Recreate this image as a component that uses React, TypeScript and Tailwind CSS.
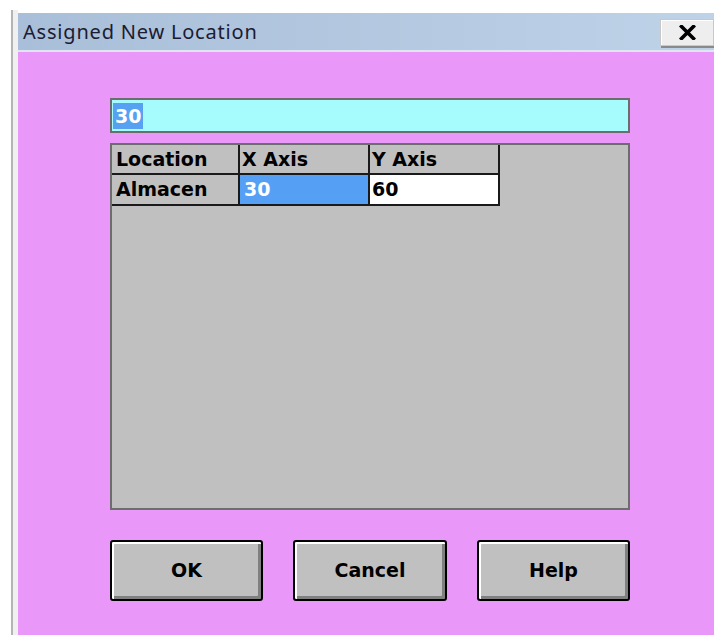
import React from "react";

const bitmapFont = { fontFamily: '"DejaVu Sans", "Liberation Sans", sans-serif' };

function CloseGlyph() {
  return (
    <svg width="17" height="15" viewBox="0 0 17 15">
      <path d="M2.5 1.5 L14.5 13.5 M14.5 1.5 L2.5 13.5" stroke="#000" strokeWidth="3.6" strokeLinecap="square" />
    </svg>
  );
}

function DialogButton({ label, width }: { label: string; width: string }) {
  return (
    <button
      className={`${width} h-[61px] bg-[#c0c0c0] border-2 border-black rounded-[3px] shadow-[inset_2px_2px_0_#ffffff,inset_-3px_-3px_0_#808080] flex items-center justify-center text-[19px] font-bold text-black`}
      style={bitmapFont}
    >
      {label}
    </button>
  );
}

export default function App() {
  return (
    <div className="w-[714px] h-[635px] overflow-hidden bg-white flex">
      {/* window frame at the left */}
      <div className="w-[11px] shrink-0" />
      <div className="w-[2px] shrink-0 mt-[10px] bg-[#b4b4b4]" />
      <div className="w-[5px] shrink-0 mt-[10px] bg-[#f0f0f0]" />

      <div className="flex-1 flex flex-col pt-[13px] min-w-0">
        {/* title bar */}
        <div className="h-[37px] shrink-0 flex items-center justify-between bg-gradient-to-r from-[#a9bed8] to-[#bed2e8]">
          <span
            className="pl-[5px] text-[20px] tracking-[0.8px] text-[#1b1b33] leading-none"
            style={{ fontFamily: '"Noto Sans", "Open Sans", sans-serif' }}
          >
            Assigned New Location
          </span>
          <div className="w-[54px] h-[27px] mt-[2px] bg-[#eeeeee] border border-[#c8c8c8] shadow-[inset_1px_1px_0_#ffffff,1px_2px_0_#8a8a8a] flex items-center justify-center">
            <CloseGlyph />
          </div>
        </div>
        <div className="h-[2px] shrink-0 bg-[#dde6f1]" />

        {/* dialog body */}
        <div className="flex-1 bg-[#e997f9] pl-[92px] pt-[46px] flex flex-col">
          <div className="w-[520px] h-[35px] border-2 border-[#6d6d6d] bg-[#a6fbfd] flex items-center pl-[1px]">
            <span
              className="h-[26px] px-[2px] bg-[#57a1f3] text-white text-[19px] leading-[26px] font-bold"
              style={bitmapFont}
            >
              30
            </span>
          </div>

          <div className="mt-[10px] w-[520px] h-[367px] border-2 border-[#6d6d6d] bg-[#c0c0c0]">
            <div
              className="grid grid-cols-[128px_130px_130px] grid-rows-[30px_31px] w-[388px] text-[19px] font-bold text-black"
              style={bitmapFont}
            >
              <div className="border-r-2 border-b-2 border-[#1a1a1a] flex items-center pl-[4px]">Location</div>
              <div className="border-r-2 border-b-2 border-[#1a1a1a] flex items-center pl-[2px]">X Axis</div>
              <div className="border-r-2 border-b-2 border-[#1a1a1a] flex items-center pl-[2px]">Y Axis</div>
              <div className="border-r-2 border-b-2 border-[#1a1a1a] flex items-center pl-[4px]">Almacen</div>
              <div className="border-r-2 border-b-2 border-[#1a1a1a] bg-[#55a0f5] text-white flex items-center pl-[4px]">30</div>
              <div className="border-r-2 border-b-2 border-[#1a1a1a] bg-white flex items-center pl-[2px]">60</div>
            </div>
          </div>

          <div className="mt-[30px] flex gap-[30px]">
            <DialogButton label="OK" width="w-[153px]" />
            <DialogButton label="Cancel" width="w-[154px]" />
            <DialogButton label="Help" width="w-[153px]" />
          </div>
        </div>
      </div>
    </div>
  );
}
